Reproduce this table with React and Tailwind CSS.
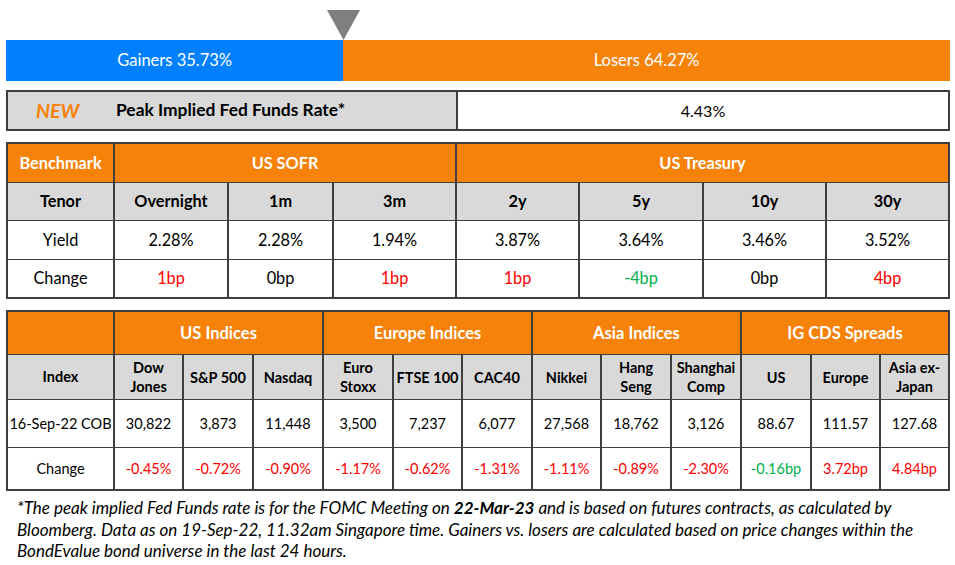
import React from "react";

const FONT = { fontFamily: "Lato, 'Open Sans', sans-serif" };

const RED = "text-[#ff0000]";
const GREEN = "text-[#00b050]";

function Cell({ children, className = "" }) {
  return (
    <div className={"flex items-center justify-center text-center " + className}>
      {children}
    </div>
  );
}

export default function App() {
  const t1Tenors = ["Overnight", "1m", "3m", "2y", "5y", "10y", "30y"];
  const t1Yields = ["2.28%", "2.28%", "1.94%", "3.87%", "3.64%", "3.46%", "3.52%"];
  const t1Changes = [
    ["1bp", RED],
    ["0bp", ""],
    ["1bp", RED],
    ["1bp", RED],
    ["-4bp", GREEN],
    ["0bp", ""],
    ["4bp", RED],
  ];

  const t2Heads = [
    ["Dow", "Jones"],
    ["S&P 500"],
    ["Nasdaq"],
    ["Euro", "Stoxx"],
    ["FTSE 100"],
    ["CAC40"],
    ["Nikkei"],
    ["Hang", "Seng"],
    ["Shanghai", "Comp"],
    ["US"],
    ["Europe"],
    ["Asia ex-", "Japan"],
  ];
  const t2Vals = ["30,822", "3,873", "11,448", "3,500", "7,237", "6,077", "27,568", "18,762", "3,126", "88.67", "111.57", "127.68"];
  const t2Chg = [
    ["-0.45%", RED],
    ["-0.72%", RED],
    ["-0.90%", RED],
    ["-1.17%", RED],
    ["-0.62%", RED],
    ["-1.31%", RED],
    ["-1.11%", RED],
    ["-0.89%", RED],
    ["-2.30%", RED],
    ["-0.16bp", GREEN],
    ["3.72bp", RED],
    ["4.84bp", RED],
  ];

  return (
    <div className="w-[955px] h-[565px] bg-white text-black overflow-hidden" style={FONT}>
      <div className="pl-[6px] pt-[10px] w-[950px]">
        {/* indicator */}
        <div className="h-[30px] pl-[321px]">
          <svg width="33" height="30" viewBox="0 0 33 30">
            <polygon points="0,0 33,0 16.5,30" fill="#7f7f7f" />
          </svg>
        </div>
        {/* gainers / losers bar */}
        <div className="flex h-[41px] w-[944px] text-white text-[16.5px]">
          <div className="w-[35.73%] bg-[#0080ff] flex items-center justify-center">Gainers 35.73%</div>
          <div className="flex-1 bg-[#f7820a] flex items-center justify-center">Losers 64.27%</div>
        </div>

        {/* Fed funds row */}
        <div className="mt-[9px] w-[944px] h-[41px] border-2 border-[#3f3f3f] bg-[#3f3f3f] grid grid-cols-[448px_490px] gap-x-[2px]">
          <div className="bg-[#d9d9d9] flex items-center">
            <span className="ml-[28px] w-[80px] text-[#f7820a] font-bold italic text-[19.5px]">NEW</span>
            <span className="font-bold text-[17.4px]">Peak Implied Fed Funds Rate*</span>
          </div>
          <Cell className="bg-white text-[16px]">4.43%</Cell>
        </div>

        {/* Table 1 */}
        <div className="mt-[11px] w-[944px] border-2 border-[#3f3f3f] bg-[#3f3f3f] grid grid-cols-[105px_112px_103px_121px_121px_122px_121px_121px] grid-rows-[38px_37px_38px_37px] gap-x-[2px] gap-y-[1px] text-[16.3px]">
          <Cell className="bg-[#f7820a] text-white font-bold">Benchmark</Cell>
          <Cell className="bg-[#f7820a] text-white font-bold col-span-3">US SOFR</Cell>
          <Cell className="bg-[#f7820a] text-white font-bold col-span-4">US Treasury</Cell>

          <Cell className="bg-[#d9d9d9] font-bold">Tenor</Cell>
          {t1Tenors.map((t) => (
            <Cell key={t} className="bg-[#d9d9d9] font-bold">{t}</Cell>
          ))}

          <Cell className="bg-white">Yield</Cell>
          {t1Yields.map((v, i) => (
            <Cell key={i} className="bg-white">{v}</Cell>
          ))}

          <Cell className="bg-white">Change</Cell>
          {t1Changes.map(([v, c], i) => (
            <Cell key={i} className={"bg-white " + c}>{v}</Cell>
          ))}
        </div>

        {/* Table 2 */}
        <div className="mt-[11px] w-[944px] border-2 border-[#3f3f3f] bg-[#3f3f3f] grid grid-cols-[105px_67px_68px_68px_68px_67px_68px_67px_68px_68px_68px_67px_67px] grid-rows-[42px_44px_47px_41px] gap-x-[2px] gap-y-[1px] text-[14.5px]">
          <Cell className="bg-[#f7820a]" />
          <Cell className="bg-[#f7820a] text-white font-bold text-[16.5px] col-span-3">US Indices</Cell>
          <Cell className="bg-[#f7820a] text-white font-bold text-[16.5px] col-span-3">Europe Indices</Cell>
          <Cell className="bg-[#f7820a] text-white font-bold text-[16.5px] col-span-3">Asia Indices</Cell>
          <Cell className="bg-[#f7820a] text-white font-bold text-[16.5px] col-span-3">IG CDS Spreads</Cell>

          <Cell className="bg-[#d9d9d9] font-bold">Index</Cell>
          {t2Heads.map((lines, i) => (
            <Cell key={i} className="bg-[#d9d9d9] font-bold leading-[19px] flex-col">
              {lines.map((l) => (
                <span key={l} className="whitespace-nowrap">{l}</span>
              ))}
            </Cell>
          ))}

          <Cell className="bg-white whitespace-nowrap">16-Sep-22 COB</Cell>
          {t2Vals.map((v, i) => (
            <Cell key={i} className="bg-white">{v}</Cell>
          ))}

          <Cell className="bg-white">Change</Cell>
          {t2Chg.map(([v, c], i) => (
            <Cell key={i} className={"bg-white " + c}>{v}</Cell>
          ))}
        </div>

        {/* Footnote */}
        <div className="mt-[6px] pl-[11px] italic text-[17px] leading-[21.5px] whitespace-nowrap">
          <div>
            *The peak implied Fed Funds rate is for the FOMC Meeting on <span className="font-bold">22-Mar-23</span> and is based on futures contracts, as calculated by
          </div>
          <div>
            Bloomberg. Data as on 19-Sep-22, 11.32am Singapore time. Gainers vs. losers are calculated based on price changes within the
          </div>
          <div>BondEvalue bond universe in the last 24 hours.</div>
        </div>
      </div>
    </div>
  );
}
